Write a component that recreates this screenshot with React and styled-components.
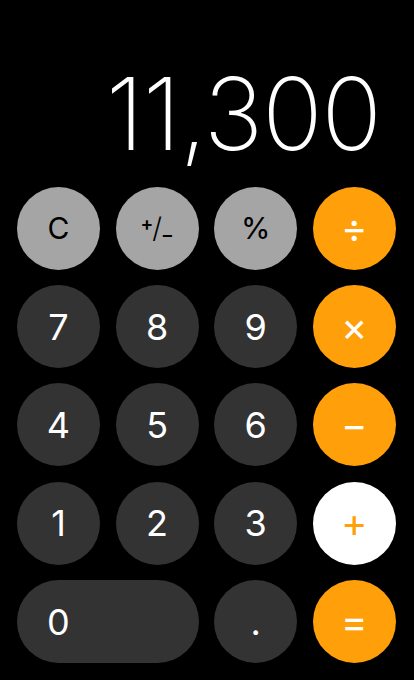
import React from 'react';
import styled, { createGlobalStyle } from 'styled-components';

const Global = createGlobalStyle`
  html, body {
    margin: 0;
    padding: 0;
    background: #000;
  }
`;

const Screen = styled.div`
  width: 414px;
  height: 680px;
  background: #000;
  display: flex;
  flex-direction: column;
  justify-content: flex-end;
  padding: 0 0 17px 17px;
  box-sizing: border-box;
  font-family: Inter, "Liberation Sans", sans-serif;
`;

const Display = styled.div`
  color: #fff;
  font-size: 100px;
  font-weight: 200;
  line-height: 100px;
  text-align: right;
  padding-right: 33px;
  margin-bottom: 23px;
  letter-spacing: -1px;
`;

const Pad = styled.div`
  display: grid;
  grid-template-columns: repeat(4, 83px);
  grid-auto-rows: 83px;
  column-gap: 15.6px;
  row-gap: 15.3px;
`;

const palette = {
  func: { bg: '#a5a5a5', fg: '#000' },
  num: { bg: '#333333', fg: '#fff' },
  op: { bg: '#ff9f0a', fg: '#fff' },
  active: { bg: '#fff', fg: '#ff9f0a' },
};

const Key = styled.button`
  border: none;
  margin: 0;
  border-radius: 42px;
  background: ${p => palette[p.kind].bg};
  color: ${p => palette[p.kind].fg};
  font-family: inherit;
  font-size: ${p => (p.kind === 'op' || p.kind === 'active' ? '40px' : p.kind === 'func' ? '30px' : '36px')};
  font-weight: 400;
  display: flex;
  align-items: center;
  justify-content: ${p => (p.wide ? 'flex-start' : 'center')};
  padding: ${p => (p.wide ? '0 0 0 30px' : '0')};
  grid-column: ${p => (p.wide ? 'span 2' : 'auto')};
  line-height: 1;
`;

const PlusMinus = styled.span`
  display: inline-flex;
  align-items: center;
  font-size: 28px;
  font-weight: 300;
  & > sup, & > sub {
    font-size: 19px;
    font-weight: 600;
    line-height: 1;
    vertical-align: baseline;
  }
  & > sup { transform: translate(1px, -5px); }
  & > sub { transform: translate(-1px, 6px); }
`;

const keys = [
  { label: 'C', kind: 'func' },
  { label: 'pm', kind: 'func' },
  { label: '%', kind: 'func' },
  { label: '÷', kind: 'op' },
  { label: '7', kind: 'num' },
  { label: '8', kind: 'num' },
  { label: '9', kind: 'num' },
  { label: '×', kind: 'op' },
  { label: '4', kind: 'num' },
  { label: '5', kind: 'num' },
  { label: '6', kind: 'num' },
  { label: '−', kind: 'op' },
  { label: '1', kind: 'num' },
  { label: '2', kind: 'num' },
  { label: '3', kind: 'num' },
  { label: '+', kind: 'active' },
  { label: '0', kind: 'num', wide: true },
  { label: '.', kind: 'num' },
  { label: '=', kind: 'op' },
];

const App = () => (
  <>
    <Global />
    <Screen>
      <Display>11,300</Display>
      <Pad>
        {keys.map(k => (
          <Key key={k.label} kind={k.kind} wide={k.wide}>
            {k.label === 'pm' ? (
              <PlusMinus><sup>+</sup>/<sub>−</sub></PlusMinus>
            ) : k.label}
          </Key>
        ))}
      </Pad>
    </Screen>
  </>
);

export default App;
